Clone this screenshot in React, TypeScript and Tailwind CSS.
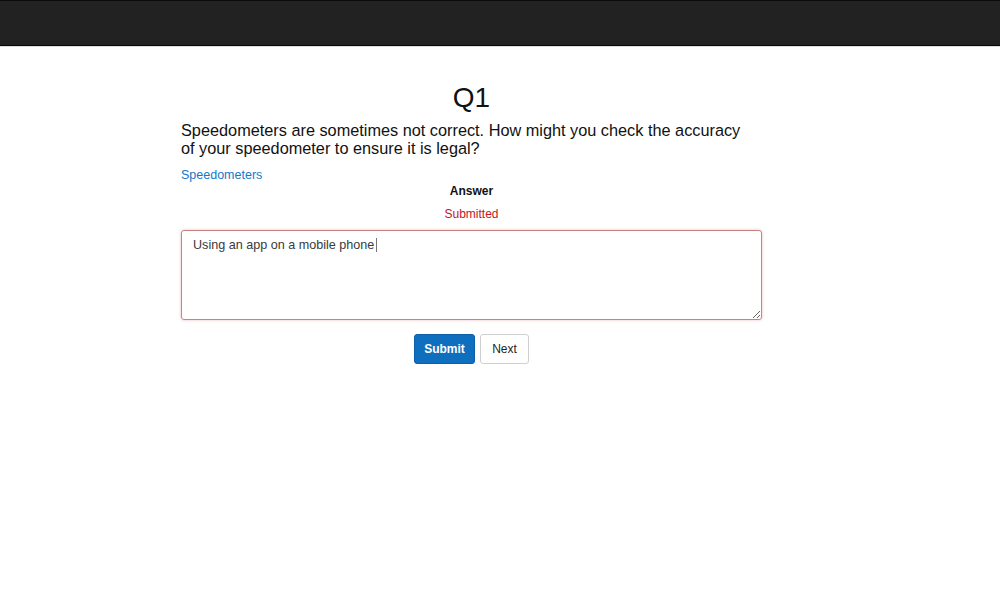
import React from "react";

export default function App() {
  return (
    <div className="min-h-[597px] bg-white" style={{ fontFamily: '"Liberation Sans", Arial, Helvetica, sans-serif' }}>
      <div className="h-[46px] bg-[#222222] border-t border-t-[#0a0a0a] border-b border-b-[#080808]" />
      <div className="h-px bg-[#dedede]" />
      <div className="ml-[181px] w-[581px] pt-[35px]">
        <h1 className="text-center text-[28px] leading-[31px] text-[#111] font-normal">Q1</h1>
        <p className="mt-[8px] w-[570px] text-[16.3px] leading-[18.4px] text-[#111]">
          Speedometers are sometimes not correct. How might you check the accuracy of your speedometer to ensure it is legal?
        </p>
        <a href="#" className="block mt-[9px] text-[12.5px] leading-[16px] text-[#1478c8]">Speedometers</a>
        <div className="text-center text-[12px] leading-[16px] font-bold text-[#111]">Answer</div>
        <div className="mt-[7px] text-center text-[12px] leading-[16px] text-[#c4161c]">Submitted</div>
        <div className="relative mt-[8px]">
          <textarea
            className="block w-[581px] h-[90px] rounded-[3px] border border-[#c98282] shadow-[0_0_3px_rgba(200,60,60,0.35)] pl-[11px] pr-[11px] pt-[6px] text-[12.6px] leading-[16px] text-[#3a3a3a] outline-none"
            style={{ fontFamily: '"Liberation Sans", Arial, Helvetica, sans-serif' }}
            defaultValue="Using an app on a mobile phone"
          />
          <span className="absolute left-[195px] top-[8px] h-[14px] w-px bg-[#777]" />
        </div>
        <div className="mt-[14px] flex justify-center gap-[5px]">
          <button className="h-[30px] w-[61px] rounded-[3px] bg-[#0f6fbf] border border-[#0c60a8] text-white text-[12px] font-bold">Submit</button>
          <button className="h-[30px] w-[49px] rounded-[3px] bg-white border border-[#cfcfcf] text-[#222] text-[12px]">Next</button>
        </div>
      </div>
    </div>
  );
}
